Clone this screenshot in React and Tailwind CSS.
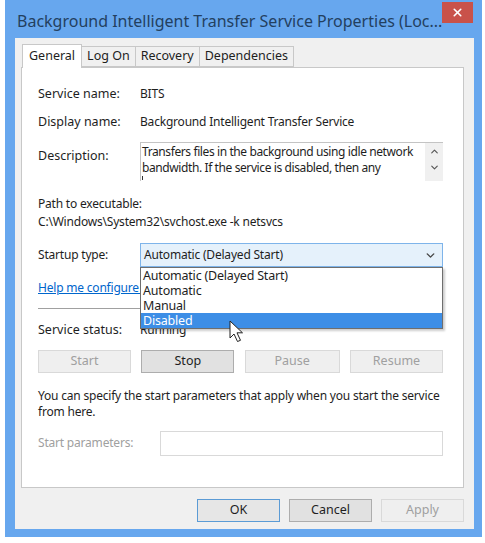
import { ChevronDown, ChevronUp, X } from "lucide-react";

const txt = "text-[12px] tracking-[-0.2px] text-[#1e1e1e]";

function Btn({ children, disabled, primary, className = "" }) {
  return (
    <div
      className={`h-[23px] flex items-center justify-center text-[12.5px] border ${
        primary
          ? "border-[#5b9bd5] bg-[#e6e6e6] text-[#1e1e1e]"
          : disabled
          ? "border-[#d9d9d9] bg-[#efefef] text-[#a0a0a0]"
          : "border-[#adadad] bg-[#e1e1e1] text-[#1e1e1e]"
      } ${className}`}
    >
      {children}
    </div>
  );
}

function Cursor() {
  return (
    <svg width="16" height="24" viewBox="0 0 16 24" className="absolute left-[229px] top-[320px]">
      <path
        d="M1 1 L1 18 L5 14 L8.5 21.5 L11.5 20.3 L8 12.8 L13.5 12.8 Z"
        fill="#ffffff"
        stroke="#222"
        strokeWidth="1"
        strokeLinejoin="round"
      />
    </svg>
  );
}

export default function App() {
  return (
    <div
      className="w-[485px] h-[543px] bg-white relative overflow-hidden"
      style={{ fontFamily: '"Noto Sans", "Open Sans", sans-serif' }}
    >
      <div className="ml-[5px] w-[477px] h-[537px] bg-[#67a7ee] flex flex-col pl-[10px] pr-[8px] pb-[8px]">
        {/* title bar */}
        <div className="h-[38px] flex justify-between">
          <div className="pl-[2px] pt-[9px] text-[16px] text-[#23405f] whitespace-nowrap">
            Background Intelligent Transfer Service Properties (Loc...
          </div>
          <div className="mt-[2px] mr-[1px] w-[38px] h-[21px] bg-[#c9524a] flex items-center justify-center">
            <X size={13} strokeWidth={3} className="text-white" />
          </div>
        </div>

        {/* client */}
        <div className="flex-1 bg-[#f0f0f0] pl-[6px] pr-[10px] pt-[6px] flex flex-col">
          {/* tabs */}
          <div className="flex items-end h-[23px] pl-[1px] relative z-10">
            <div className="h-[24px] px-[6px] bg-white border border-b-0 border-[#c8c8c8] text-[12.5px] text-[#1e1e1e] flex items-center -mb-[1px]">
              General
            </div>
            <div className="h-[21px] px-[5px] bg-[#f0f0f0] border border-l-0 border-[#c8c8c8] text-[12.5px] text-[#1e1e1e] flex items-center">
              Log On
            </div>
            <div className="h-[21px] px-[5px] bg-[#f0f0f0] border border-l-0 border-[#c8c8c8] text-[12.5px] text-[#1e1e1e] flex items-center">
              Recovery
            </div>
            <div className="h-[21px] px-[5px] bg-[#f0f0f0] border border-l-0 border-[#c8c8c8] text-[12.5px] text-[#1e1e1e] flex items-center">
              Dependencies
            </div>
          </div>

          {/* panel */}
          <div className="h-[421px] bg-white border border-[#c8c8c8] pl-[16px] pr-[20px] pt-[16px]">
            <div className={`flex ${txt} h-[20px] items-center`}>
              <div className="w-[102px] text-[12.5px] tracking-normal">Service name:</div>
              <div>BITS</div>
            </div>
            <div className={`flex ${txt} h-[20px] items-center mt-[8px]`}>
              <div className="w-[102px] text-[12.5px] tracking-normal">Display name:</div>
              <div>Background Intelligent Transfer Service</div>
            </div>
            <div className={`flex ${txt} mt-[10px]`}>
              <div className="w-[102px] pt-[5px] text-[12.5px] tracking-normal">Description:</div>
              <div className="flex-1 h-[39px] border-t border-l border-[#c4c4c4] bg-white flex">
                <div className="flex-1 leading-[16px] pt-[1px] pl-[1px] whitespace-nowrap overflow-hidden tracking-[-0.4px]">
                  <div>Transfers files in the background using idle network</div>
                  <div>bandwidth. If the service is disabled, then any</div>
                  <div className="w-[1px] h-[4px] bg-[#333]" />
                </div>
                <div className="w-[18px] bg-[#f0f0f0] flex flex-col items-center pt-[3px] text-[#555]">
                  <ChevronUp size={11} strokeWidth={2.5} />
                  <ChevronDown size={11} strokeWidth={2.5} className="mt-[5px]" />
                </div>
              </div>
            </div>

            <div className={`${txt} mt-[14px] leading-[18px]`}>
              <div>Path to executable:</div>
              <div>C:\Windows\System32\svchost.exe -k netsvcs</div>
            </div>

            <div className={`flex ${txt} mt-[12px] items-center`}>
              <div className="w-[102px]">Startup type:</div>
              <div className="flex-1 h-[24px] border border-[#7eb4ea] bg-[#e5f1fb] flex items-center justify-between pl-[3px] pr-[5px]">
                <span>Automatic (Delayed Start)</span>
                <ChevronDown size={13} strokeWidth={2.5} className="text-[#444]" />
              </div>
            </div>

            <div className="mt-[12px] text-[12px] tracking-[-0.2px] text-[#0066cc] underline whitespace-nowrap w-[102px] overflow-hidden">
              Help me configure service startup options.
            </div>
            <div className="w-[102px] border-t border-[#a0a0a0] mt-[11px]" />

            <div className={`flex ${txt} mt-[12px] items-center`}>
              <div className="w-[102px] text-[12.5px] tracking-normal">Service status:</div>
              <div>Running</div>
            </div>

            <div className="flex justify-between mt-[10px]">
              <Btn disabled className="w-[93px]">Start</Btn>
              <Btn className="w-[93px]">Stop</Btn>
              <Btn disabled className="w-[95px]">Pause</Btn>
              <Btn disabled className="w-[93px]">Resume</Btn>
            </div>

            <div className={`${txt} mt-[15px] leading-[16px] whitespace-nowrap`}>
              <div>You can specify the start parameters that apply when you start the service</div>
              <div>from here.</div>
            </div>

            <div className="flex items-center mt-[11px]">
              <div className="w-[122px] text-[12px] tracking-[-0.2px] text-[#a0a0a0]">Start parameters:</div>
              <div className="flex-1 h-[25px] border border-[#d9d9d9] bg-white" />
            </div>
          </div>

          {/* bottom buttons */}
          <div className="flex justify-end gap-[9px] mt-[11px]">
            <Btn primary className="w-[83px]">OK</Btn>
            <Btn className="w-[83px]">Cancel</Btn>
            <Btn disabled className="w-[83px]">Apply</Btn>
          </div>
        </div>
      </div>

      {/* dropdown list */}
      <div className="absolute left-[140px] top-[267px] w-[303px] bg-white border border-[#6e6e6e] shadow-[2px_2px_2px_rgba(0,0,0,0.2)] text-[12.5px] tracking-[-0.2px] text-[#1e1e1e] leading-[15px]">
        <div className="pl-[2px]">Automatic (Delayed Start)</div>
        <div className="pl-[2px]">Automatic</div>
        <div className="pl-[2px]">Manual</div>
        <div className="pl-[2px] bg-[#3d8ee6] text-white">Disabled</div>
      </div>

      <Cursor />
    </div>
  );
}
